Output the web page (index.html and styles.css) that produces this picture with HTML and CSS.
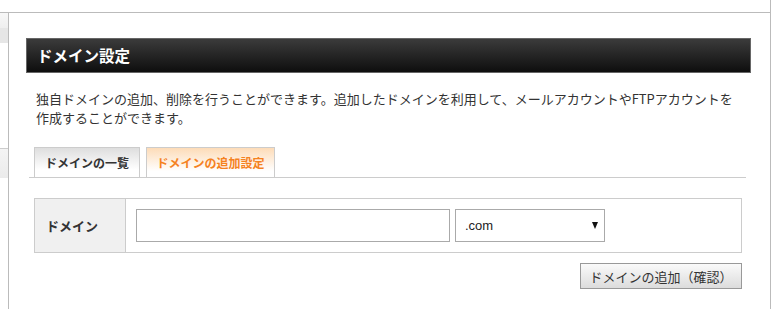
FILE: index.html
```html
<!DOCTYPE html>
<html lang="ja">
<head>
<meta charset="utf-8">
<title>ドメイン設定</title>
<link rel="stylesheet" href="styles.css">
</head>
<body>
<div class="frame">
  <div class="topbar"></div>
  <div class="layout">
    <aside class="side">
      <div class="side-head"></div>
      <div class="side-sel"></div>
      <div class="side-gap"></div>
      <div class="side-item"></div>
    </aside>
    <main class="main">
      <h1 class="title">ドメイン設定</h1>
      <p class="desc">独自ドメインの追加、削除を行うことができます。追加したドメインを利用して、メールアカウントやFTPアカウントを<br>作成することができます。</p>
      <div class="tabs">
        <a class="tab">ドメインの一覧</a>
        <a class="tab active">ドメインの追加設定</a>
      </div>
      <div class="form-area">
        <div class="form-row">
          <div class="form-label">ドメイン</div>
          <div class="form-field">
            <input class="text-input" type="text">
            <div class="select-wrap">
              <select class="select">
                <option>.com</option>
              </select>
            </div>
          </div>
        </div>
        <div class="actions">
          <button class="btn" type="button">ドメインの追加（確認）</button>
        </div>
      </div>
    </main>
  </div>
</div>
</body>
</html>
```

FILE: styles.css
```css
html, body {
  margin: 0;
  padding: 0;
  background: #fff;
}
body {
  font-family: "Noto Sans CJK JP", "Noto Sans", sans-serif;
  color: #333;
  width: 776px;
  height: 309px;
  overflow: hidden;
}
.frame {
  width: 770px;
  height: 309px;
  border-right: 1px solid #bbb;
  display: flex;
  flex-direction: column;
}
.topbar {
  height: 12px;
  border-bottom: 1px solid #bbb;
  flex: none;
}
.layout {
  flex: 1;
  display: flex;
}
.side {
  width: 8px;
  border-right: 1px solid #bbb;
  flex: none;
  display: flex;
  flex-direction: column;
}
.side-head {
  height: 15px;
  background: linear-gradient(#f7f7f7, #efefef);
}
.side-sel {
  height: 15px;
  background: #e6e6e6;
}
.side-gap {
  height: 105px;
  border-bottom: 1px solid #ccc;
}
.side-item {
  height: 29px;
  background: linear-gradient(#f4f4f4, #ebebeb);
}
.main {
  flex: 1;
  padding: 25px 19px 0 17px;
}
.title {
  margin: 0;
  height: 33px;
  border: 1px solid #666;
  background: linear-gradient(#3b3b3b, #0e0e0e);
  color: #fff;
  font-size: 15.5px;
  font-weight: bold;
  line-height: 33px;
  padding-left: 10px;
}
.desc {
  margin: 16px 0 0 10px;
  font-size: 13px;
  line-height: 19px;
  color: #333;
}
.tabs {
  margin: 20px 5px 0 3px;
  padding-left: 5px;
  border-bottom: 1px solid #ccc;
  display: flex;
  gap: 6px;
  height: 30px;
}
.tab {
  display: flex;
  align-items: center;
  justify-content: center;
  border: 1px solid #ccc;
  border-bottom: none;
  font-size: 12px;
  font-weight: bold;
  color: #333;
  background: linear-gradient(#dedede, #fff 75%);
  width: 104px;
  height: 29px;
}
.tab.active {
  width: 127px;
  color: #f5821f;
  background: linear-gradient(#fddcb8, #fff 80%);
}
.form-area {
  margin: 20px 9px 0 8px;
}
.form-row {
  display: flex;
  border: 1px solid #ccc;
  height: 53px;
}
.form-label {
  background: #f0f0f0;
  border-right: 1px solid #ccc;
  font-size: 13px;
  font-weight: bold;
  color: #333;
  display: flex;
  align-items: center;
  padding-left: 11px;
  box-sizing: border-box;
  width: 91px;
}
.form-field {
  flex: 1;
  display: flex;
  gap: 5px;
  padding: 10px 0 0 10px;
}
.text-input {
  box-sizing: border-box;
  width: 314px;
  height: 33px;
  border: 1px solid #aaa;
  margin: 0;
  padding: 0 8px;
  font-size: 13px;
}
.select-wrap {
  position: relative;
  width: 150px;
  height: 33px;
}
.select {
  appearance: none;
  -webkit-appearance: none;
  box-sizing: border-box;
  width: 150px;
  height: 33px;
  margin: 0;
  border: 1px solid #aaa;
  border-radius: 0;
  background: #fff;
  font-family: "Liberation Sans", Arial, sans-serif;
  font-size: 13px;
  color: #222;
  padding: 0 0 0 9px;
}
.select-wrap::after {
  content: "";
  position: absolute;
  right: 7px;
  top: 13px;
  border-left: 3.5px solid transparent;
  border-right: 3.5px solid transparent;
  border-top: 7px solid #111;
  pointer-events: none;
}
.actions {
  display: flex;
  justify-content: flex-end;
  margin-top: 10px;
}
.btn {
  box-sizing: border-box;
  width: 162px;
  height: 26px;
  margin: 0;
  border: 1px solid #999;
  border-radius: 0;
  background: linear-gradient(#fafafa, #dcdcdc);
  font-family: "Noto Sans CJK JP", sans-serif;
  font-size: 13px;
  color: #333;
  padding: 0;
}
```
